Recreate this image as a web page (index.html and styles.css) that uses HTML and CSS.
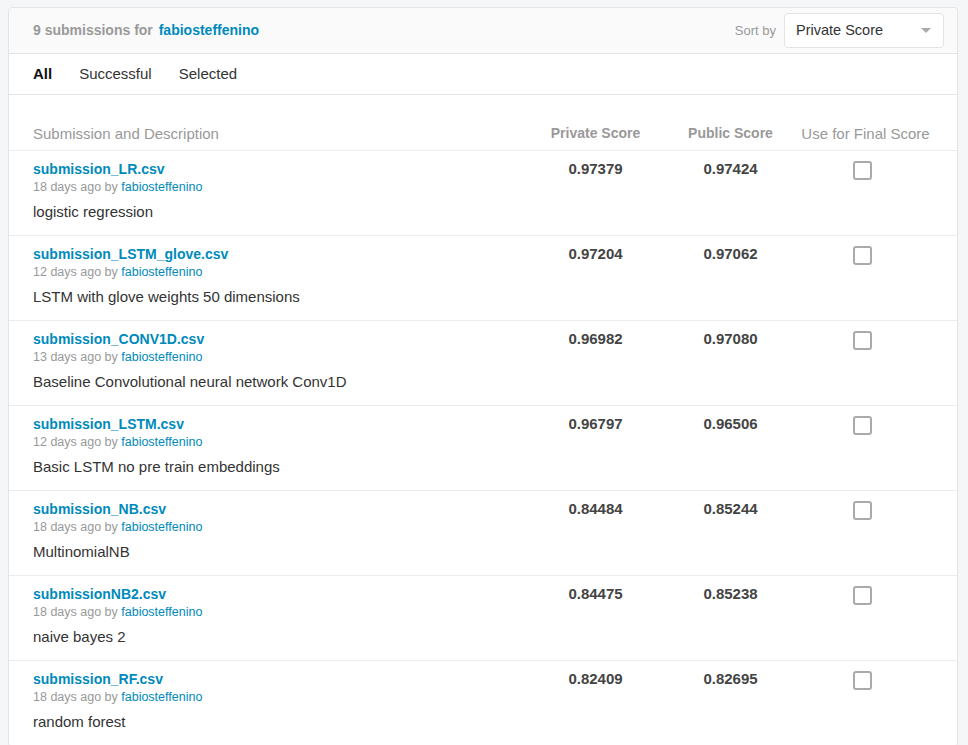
FILE: index.html
```html
<!DOCTYPE html>
<html>
<head>
<meta charset="utf-8">
<link rel="stylesheet" href="styles.css">
</head>
<body>
<div class="card">
  <div class="card-head">
    <div class="title"><span class="count">9 submissions for</span> <a class="user" href="#">fabiosteffenino</a></div>
    <div class="sort">
      <span class="sort-label">Sort by</span>
      <div class="select"><span>Private Score</span><span class="caret"></span></div>
    </div>
  </div>
  <div class="tabs">
    <span class="tab active">All</span>
    <span class="tab">Successful</span>
    <span class="tab">Selected</span>
  </div>
  <div class="table">
    <div class="row head">
      <div class="c-desc">Submission and Description</div>
      <div class="c-num strong">Private Score</div>
      <div class="c-num strong">Public Score</div>
      <div class="c-num">Use for Final Score</div>
    </div>
    <div class="row">
      <div class="c-desc"><a class="file" href="#">submission_LR.csv</a><div class="meta">18 days ago by <a href="#">fabiosteffenino</a></div><div class="desc">logistic regression</div></div>
      <div class="c-num score">0.97379</div><div class="c-num score">0.97424</div><div class="c-num"><span class="check"></span></div>
    </div>
    <div class="row">
      <div class="c-desc"><a class="file" href="#">submission_LSTM_glove.csv</a><div class="meta">12 days ago by <a href="#">fabiosteffenino</a></div><div class="desc">LSTM with glove weights 50 dimensions</div></div>
      <div class="c-num score">0.97204</div><div class="c-num score">0.97062</div><div class="c-num"><span class="check"></span></div>
    </div>
    <div class="row">
      <div class="c-desc"><a class="file" href="#">submission_CONV1D.csv</a><div class="meta">13 days ago by <a href="#">fabiosteffenino</a></div><div class="desc">Baseline Convolutional neural network Conv1D</div></div>
      <div class="c-num score">0.96982</div><div class="c-num score">0.97080</div><div class="c-num"><span class="check"></span></div>
    </div>
    <div class="row">
      <div class="c-desc"><a class="file" href="#">submission_LSTM.csv</a><div class="meta">12 days ago by <a href="#">fabiosteffenino</a></div><div class="desc">Basic LSTM no pre train embeddings</div></div>
      <div class="c-num score">0.96797</div><div class="c-num score">0.96506</div><div class="c-num"><span class="check"></span></div>
    </div>
    <div class="row">
      <div class="c-desc"><a class="file" href="#">submission_NB.csv</a><div class="meta">18 days ago by <a href="#">fabiosteffenino</a></div><div class="desc">MultinomialNB</div></div>
      <div class="c-num score">0.84484</div><div class="c-num score">0.85244</div><div class="c-num"><span class="check"></span></div>
    </div>
    <div class="row">
      <div class="c-desc"><a class="file" href="#">submissionNB2.csv</a><div class="meta">18 days ago by <a href="#">fabiosteffenino</a></div><div class="desc">naive bayes 2</div></div>
      <div class="c-num score">0.84475</div><div class="c-num score">0.85238</div><div class="c-num"><span class="check"></span></div>
    </div>
    <div class="row">
      <div class="c-desc"><a class="file" href="#">submission_RF.csv</a><div class="meta">18 days ago by <a href="#">fabiosteffenino</a></div><div class="desc">random forest</div></div>
      <div class="c-num score">0.82409</div><div class="c-num score">0.82695</div><div class="c-num"><span class="check"></span></div>
    </div>
  </div>
</div>
</body>
</html>
```
FILE: styles.css
```css
* { box-sizing: border-box; }
html, body { margin: 0; padding: 0; }
body {
  background: #f4f6f7;
  font-family: "Liberation Sans", Arial, sans-serif;
  font-size: 15px;
  color: #444;
  padding: 7px 11px 0 8px;
}
a { color: #008abc; text-decoration: none; }
.card {
  background: #fff;
  border: 1px solid #e2e4e6;
  border-radius: 4px;
  width: 950px;
}
.card-head {
  display: flex;
  align-items: center;
  justify-content: space-between;
  height: 46px;
  padding: 0 13px 1px 24px;
  background: #fafafa;
  border-bottom: 1px solid #e4e4e4;
  border-radius: 4px 4px 0 0;
}
.title { font-weight: bold; font-size: 14px; }
.count { color: #999; }
.user { color: #008abc; margin-left: 2px; }
.sort { display: flex; align-items: center; gap: 8px; }
.sort-label { color: #999; font-size: 13px; }
.select {
  width: 160px;
  height: 35px;
  background: #fff;
  border: 1px solid #e4e4e4;
  border-radius: 4px;
  display: flex;
  align-items: center;
  justify-content: space-between;
  padding: 0 11px;
  color: #333;
  font-size: 14.5px;
}
.caret {
  width: 0; height: 0;
  border-left: 5px solid transparent;
  border-right: 5px solid transparent;
  border-top: 5px solid #aaa;
  margin-right: 1px;
}
.tabs {
  display: flex;
  gap: 27px;
  height: 41px;
  align-items: center;
  padding: 0 24px 2px;
  border-bottom: 1px solid #e4e4e4;
}
.tab { color: #333; font-size: 15px; }
.tab.active { font-weight: bold; color: #111; }
.table { padding-top: 25px; }
.row {
  display: grid;
  grid-template-columns: 1fr 135px 135px 135px;
  padding: 0 24px;
  border-bottom: 1px solid #ececec;
  height: 85px;
  padding-top: 10px;
}
.row.head {
  height: 31px;
  padding-top: 5px;
  color: #999;
  font-size: 15px;
}
.c-num { text-align: center; }
.strong { font-weight: bold; font-size: 14px; }
.file { font-weight: bold; font-size: 14px; line-height: 17px; display: block; }
.meta { color: #999; font-size: 12.5px; line-height: 15px; margin-top: 2px; }
.meta a { color: #008abc; }
.desc { color: #333; font-size: 15px; margin-top: 8px; line-height: 18px; }
.score { font-weight: bold; color: #444; line-height: 15px; font-size: 15px; }
.check {
  display: inline-block;
  width: 19px; height: 19px;
  border: 2px solid #aaa;
  border-radius: 3px;
  margin-right: 7px;
}
```
